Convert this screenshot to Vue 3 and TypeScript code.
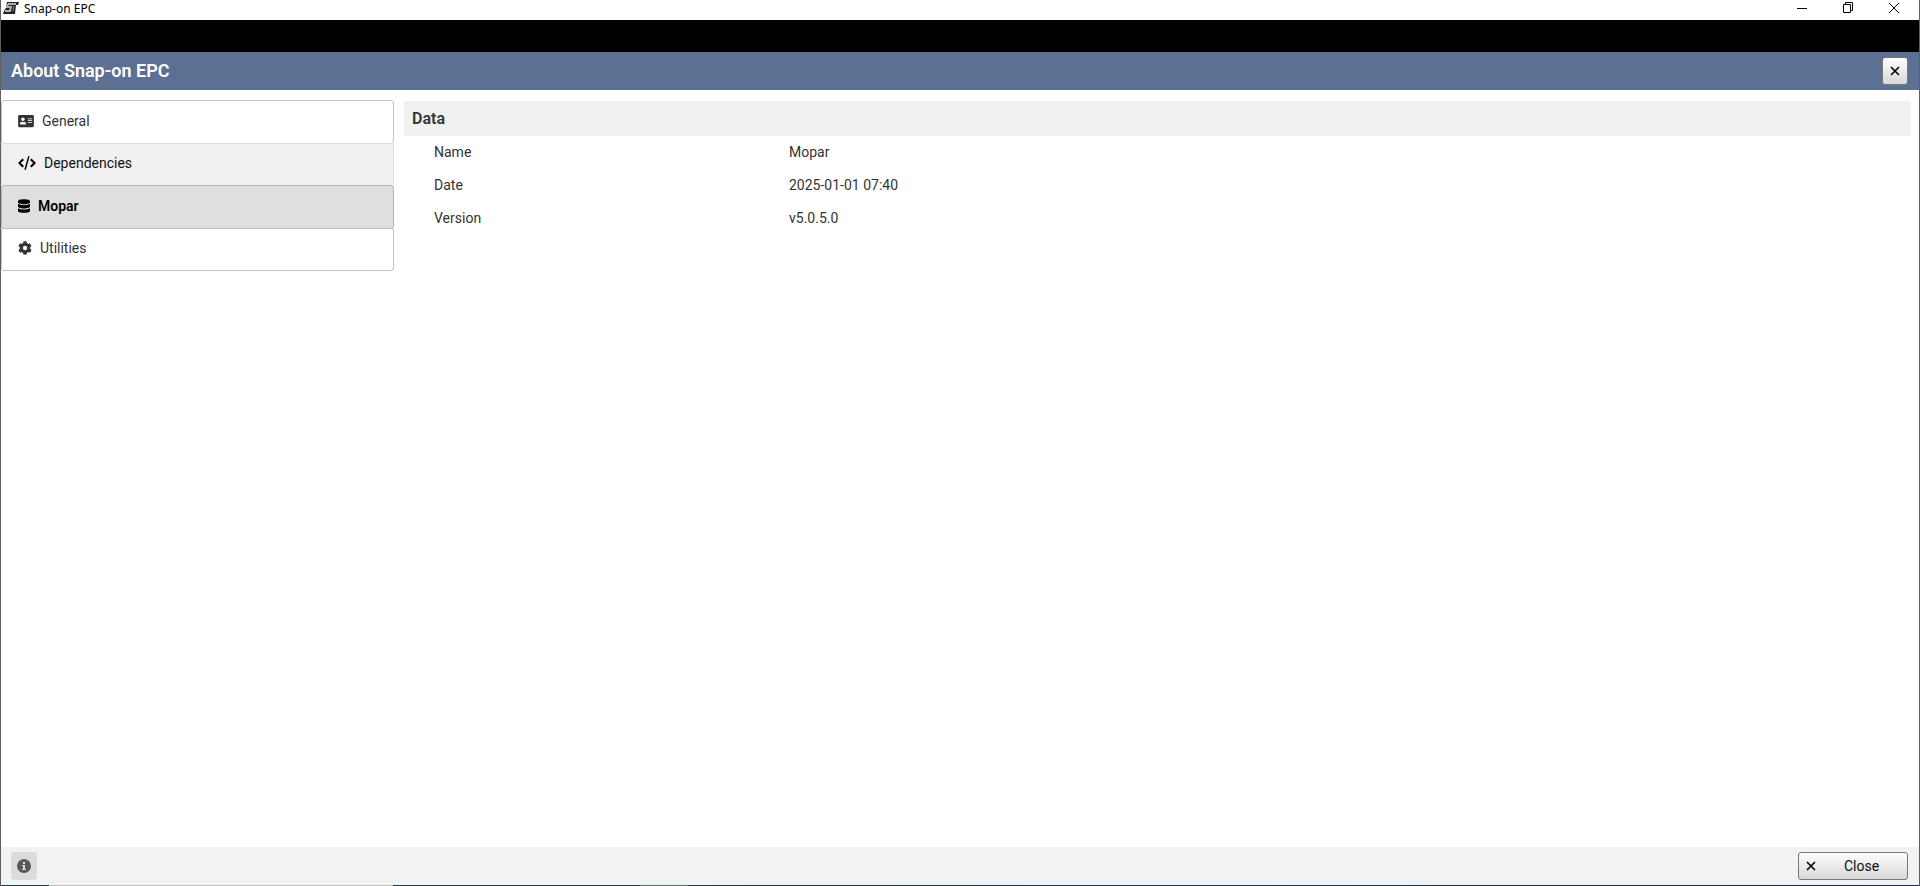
<script setup lang="ts">
import { ref } from 'vue'

interface Section {
  id: string
  label: string
  icon: string
  viewBox: string
  width: number
}

const sections: Section[] = [
  {
    id: 'general',
    label: 'General',
    viewBox: '0 0 576 512',
    width: 16,
    icon: 'M528 32H48C21.500 32 0 53.500 0 80v352c0 26.500 21.500 48 48 48h480c26.500 0 48-21.500 48-48V80c0-26.500-21.500-48-48-48zM176 128c35.300 0 64 28.700 64 64s-28.700 64-64 64-64-28.700-64-64 28.700-64 64-64zm112 236.800c0 10.600-10 19.200-22.400 19.200H86.400C74 384 64 375.400 64 364.800v-19.200c0-31.800 30.100-57.600 67.200-57.600h5c12.300 5.100 25.700 8 39.800 8s27.600-2.900 39.800-8h5c37.100 0 67.200 25.800 67.200 57.600zM512 312c0 4.400-3.600 8-8 8H360c-4.400 0-8-3.600-8-8v-16c0-4.400 3.600-8 8-8h144c4.400 0 8 3.600 8 8zm0-64c0 4.400-3.600 8-8 8H360c-4.400 0-8-3.600-8-8v-16c0-4.400 3.600-8 8-8h144c4.400 0 8 3.600 8 8zm0-64c0 4.400-3.600 8-8 8H360c-4.400 0-8-3.600-8-8v-16c0-4.400 3.600-8 8-8h144c4.400 0 8 3.600 8 8z',
  },
  {
    id: 'dependencies',
    label: 'Dependencies',
    viewBox: '0 0 18 14',
    width: 18,
    icon: 'M4.500 2.500L6 4L2.800 7L6 10L4.500 11.500L0 7ZM13.500 2.500L12 4L15.200 7L12 10L13.500 11.500L18 7ZM10.200 0L11.600 0.400L7.800 14L6.400 13.600Z',
  },
  {
    id: 'mopar',
    label: 'Mopar',
    viewBox: '0 0 448 512',
    width: 12,
    icon: 'M448 73.100v45.700C448 159.100 347.700 192 224 192S0 159.100 0 118.900V73.100C0 32.900 100.300 0 224 0s224 32.900 224 73.100zM448 176v102.900C448 319.100 347.700 352 224 352S0 319.100 0 278.900V176c48.100 33.100 136.200 48.600 224 48.600S399.900 209.100 448 176zm0 160v102.900C448 479.100 347.700 512 224 512S0 479.100 0 438.900V336c48.100 33.100 136.200 48.600 224 48.600S399.900 369.100 448 336z',
  },
  {
    id: 'utilities',
    label: 'Utilities',
    viewBox: '0 0 512 512',
    width: 14,
    icon: 'M487.400 315.700l-42.600-24.600c4.300-23.200 4.300-47 0-70.200l42.600-24.600c4.900-2.800 7.100-8.600 5.500-14-11.100-35.600-30-67.800-54.700-94.600-3.800-4.100-10-5.100-14.800-2.300L380.800 110c-17.900-15.400-38.500-27.300-60.800-35.100V25.800c0-5.600-3.900-10.500-9.400-11.700-36.700-8.200-74.300-7.800-109.200 0-5.500 1.200-9.400 6.100-9.400 11.700V75c-22.200 7.900-42.800 19.800-60.800 35.100L88.700 85.500c-4.900-2.800-11-1.900-14.800 2.300-24.700 26.700-43.600 58.900-54.700 94.600-1.700 5.400.6 11.200 5.500 14L67.300 221c-4.300 23.200-4.300 47 0 70.200l-42.600 24.600c-4.900 2.800-7.100 8.600-5.500 14 11.100 35.600 30 67.800 54.700 94.600 3.800 4.100 10 5.100 14.800 2.300l42.600-24.600c17.900 15.400 38.500 27.300 60.800 35.100v49.200c0 5.600 3.900 10.500 9.400 11.700 36.700 8.200 74.300 7.800 109.200 0 5.500-1.200 9.400-6.100 9.400-11.700v-49.200c22.200-7.900 42.800-19.800 60.800-35.100l42.600 24.600c4.900 2.800 11 1.900 14.800-2.300 24.700-26.700 43.600-58.900 54.700-94.600 1.500-5.500-.7-11.300-5.600-14.100zM256 336c-44.100 0-80-35.900-80-80s35.900-80 80-80 80 35.900 80 80-35.900 80-80 80z',
  },
]

const rows: { name: string; value: string }[] = [
  { name: 'Name', value: 'Mopar' },
  { name: 'Date', value: '2025-01-01 07:40' },
  { name: 'Version', value: 'v5.0.5.0' },
]

const active = ref('mopar')
</script>

<template>
  <div class="window">
    <header class="titlebar">
      <svg class="logo" viewBox="0 0 16 12" aria-hidden="true">
        <path d="M4 0H16L15 3H13L12 12H0L1 9L3 6Z" fill="#222" />
        <path d="M5 2H13M5 2L4 5H8L7 9H2" fill="none" stroke="#b0b0b0" stroke-width="2" />
        <path d="M11 4L10 9" fill="none" stroke="#888" stroke-width="1" />
      </svg>
      <span class="app-name">Snap-on EPC</span>
      <div class="controls">
        <button type="button" aria-label="Minimize">
          <svg viewBox="0 0 12 12"><path d="M1 7.500H11" /></svg>
        </button>
        <button type="button" aria-label="Restore">
          <svg viewBox="0 0 12 12"><path d="M1.500 3.500H8.500V11.500H1.500ZM3.500 3.500V1.500H10.500V9.500H8.500" /></svg>
        </button>
        <button type="button" aria-label="Close window">
          <svg viewBox="0 0 12 12"><path d="M1 2L11 12M11 2L1 12" /></svg>
        </button>
      </div>
    </header>
    <div class="banner"></div>
    <div class="dialog-head">
      <h1>About Snap-on EPC</h1>
      <button type="button" class="push square" aria-label="Close dialog">
        <svg class="cross" viewBox="0 0 10 10"><path d="M1 1L9 9M9 1L1 9" /></svg>
      </button>
    </div>
    <main class="body">
      <nav class="sections">
        <button
          v-for="s in sections"
          :key="s.id"
          type="button"
          class="section"
          :class="[s.id, { active: active === s.id }]"
          @click="active = s.id"
        >
          <svg :viewBox="s.viewBox" :width="s.width" height="14" aria-hidden="true"><path :d="s.icon" /></svg>
          <span>{{ s.label }}</span>
        </button>
      </nav>
      <section class="details">
        <h2>Data</h2>
        <table>
          <tbody>
            <tr v-for="r in rows" :key="r.name">
              <th scope="row">{{ r.name }}</th>
              <td>{{ r.value }}</td>
            </tr>
          </tbody>
        </table>
      </section>
    </main>
    <footer class="footer">
      <button type="button" class="info" aria-label="Information">
        <svg viewBox="0 0 14 14">
          <circle cx="7" cy="7" r="7" fill="#595959" />
          <path d="M6 3H8V5H6ZM5 6H8V10H9V11H5V10H6V7H5Z" fill="#dcdcdc" />
        </svg>
      </button>
      <button type="button" class="push close">
        <svg class="cross" viewBox="0 0 10 10" aria-hidden="true"><path d="M1 1L9 9M9 1L1 9" /></svg>
        <span>Close</span>
      </button>
    </footer>
    <div class="edge"><i></i><i></i><i></i><i></i><i></i></div>
  </div>
</template>

<style>
body {
  margin: 0;
}
</style>

<style scoped>
.window {
  box-sizing: border-box;
  display: flex;
  flex-direction: column;
  min-height: 100vh;
  border: solid #5f5f5f;
  border-width: 0 1px;
  background: #fff;
  color: #333;
  font: 14px/20px Roboto, sans-serif;
}
button {
  padding: 0;
  border: 0;
  background: none;
  color: inherit;
  font: inherit;
}
.titlebar {
  display: flex;
  align-items: center;
  height: 20px;
  padding: 0 8px 0 2px;
  color: #000;
}
.logo {
  width: 16px;
  height: 12px;
  margin: 0 5px 4px 0;
}
.app-name {
  font: 12px/16px "Noto Sans", sans-serif;
  padding-bottom: 2px;
}
.controls {
  display: flex;
  margin-left: auto;
}
.controls button {
  display: grid;
  place-items: center;
  width: 34px;
  height: 20px;
  margin-left: 12px;
}
.controls svg {
  width: 12px;
  height: 12px;
  margin-bottom: 6px;
  overflow: visible;
  fill: none;
  stroke: #000;
}
.banner {
  height: 32px;
  background: #000;
}
.dialog-head {
  display: flex;
  align-items: center;
  justify-content: space-between;
  height: 38px;
  padding: 0 11px 0 10px;
  background: #5c7093;
}
h1 {
  margin: 0;
  color: #fff;
  font-size: 18px;
  font-weight: 600;
}
.push {
  box-sizing: border-box;
  height: 28px;
  border: 1px solid #777;
  border-radius: 3px;
  background: linear-gradient(#fdfdfd, #d8d8d8);
  color: #111;
}
.square {
  display: grid;
  place-items: center;
  width: 26px;
}
.cross {
  width: 10px;
  height: 10px;
  fill: none;
  stroke: #000;
  stroke-width: 1.600;
}
.body {
  display: flex;
  flex: 1;
  gap: 10px;
  align-items: flex-start;
  padding: 10px 8px 10px 0;
}
.sections {
  display: grid;
  box-sizing: border-box;
  flex: 0 0 393px;
  grid-template-rows: repeat(4, 1fr);
  height: 171px;
  padding-bottom: 1px;
}
.section {
  display: flex;
  box-sizing: border-box;
  align-items: center;
  gap: 8px;
  margin-bottom: -1px;
  padding: 0 16px 2px;
  border: 1px solid #c1c1c1;
  border-radius: 3px;
  text-align: left;
}
.section svg {
  flex: none;
  fill: #333;
}
.section.dependencies {
  border-color: #dedede;
  background: #f1f1f1;
  color: #111;
}
.section.dependencies svg,
.section.active svg {
  fill: #000;
}
.section.active {
  border-color: #b4b4b4;
  background: #dfdfdf;
  color: #000;
  font-weight: 600;
}
.details {
  flex: 1;
  padding-top: 1px;
}
h2 {
  box-sizing: border-box;
  height: 35px;
  margin: 0;
  padding: 1px 8px 0;
  background: #f1f1f1;
  font-size: 16px;
  font-weight: 600;
  line-height: 34px;
}
table {
  width: 100%;
  border-collapse: collapse;
  table-layout: fixed;
}
th,
td {
  box-sizing: border-box;
  height: 33px;
  padding: 0 0 2px;
  font-weight: 400;
  text-align: left;
}
th {
  width: 385px;
  padding-left: 30px;
}
.footer {
  display: flex;
  align-items: center;
  justify-content: space-between;
  height: 38px;
  padding: 0 11px 0 10px;
  background: #f0f2f4;
}
.info {
  display: grid;
  place-items: center;
  width: 26px;
  height: 28px;
  border-radius: 3px;
  background: #dcdcdc;
}
.info svg {
  width: 14px;
  height: 14px;
}
.close {
  display: flex;
  align-items: center;
  width: 110px;
  padding: 0 7px;
}
.close span {
  flex: 1;
  padding-left: 7px;
  text-align: center;
}
.edge {
  display: grid;
  grid-template-columns: 48px 344px 247px 48px 1fr;
  height: 1px;
}
.edge i {
  background: #263c40;
}
.edge i:nth-child(2) {
  background: #bfbfbf;
}
.edge i:nth-child(4) {
  background: #5a6f6c;
}
.edge i:nth-child(5) {
  background: linear-gradient(90deg, #263c40, #262c45);
}
</style>
